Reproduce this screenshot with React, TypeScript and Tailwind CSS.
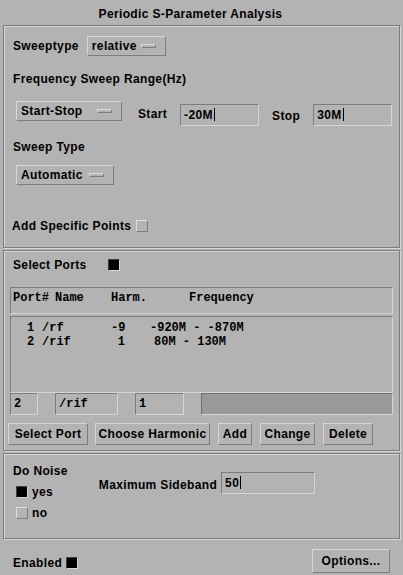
import React from 'react';

const Frame: React.FC<{ className?: string; children: React.ReactNode }> = ({ className = '', children }) => (
  <div className={`mx-[3px] border border-[#7c7c7c] shadow-[inset_1px_1px_0_#d6d6d6,1px_1px_0_#d6d6d6] ${className}`}>
    {children}
  </div>
);

const Dropdown: React.FC<{ label: string; className?: string }> = ({ label, className = '' }) => (
  <div
    className={`h-[20px] flex items-center justify-between pl-[4px] pr-[9px] border border-t-[#d6d6d6] border-l-[#d6d6d6] border-b-[#7c7c7c] border-r-[#7c7c7c] ${className}`}
  >
    <span>{label}</span>
    <span className="w-[15px] h-[4px] border border-t-[#dcdcdc] border-l-[#dcdcdc] border-b-[#7c7c7c] border-r-[#7c7c7c]" />
  </div>
);

const Field: React.FC<{ value?: string; className?: string; mono?: boolean; cursor?: boolean }> = ({
  value = '',
  className = '',
  mono,
  cursor,
}) => (
  <div
    className={`h-[22px] flex items-start pt-[3px] px-[3px] border border-t-[#7c7c7c] border-l-[#7c7c7c] border-b-[#d6d6d6] border-r-[#d6d6d6] ${
      mono ? "font-['Liberation_Mono',monospace] tracking-normal" : ''
    } ${className}`}
  >
    <span>{value}</span>
    {cursor && <span className="w-[1px] h-[13px] bg-black ml-[1px]" />}
  </div>
);

const Button: React.FC<{ label: string; className?: string }> = ({ label, className = '' }) => (
  <div
    className={`h-[22px] flex items-center justify-center border border-t-[#d6d6d6] border-l-[#d6d6d6] border-b-[#7c7c7c] border-r-[#7c7c7c] ${className}`}
  >
    {label}
  </div>
);

const Box: React.FC<{ on?: boolean; className?: string }> = ({ on, className = '' }) => (
  <span
    className={`inline-block w-[12px] h-[12px] border ${
      on
        ? 'bg-black border-t-[#404040] border-l-[#404040] border-b-[#d6d6d6] border-r-[#d6d6d6]'
        : 'border-t-[#dcdcdc] border-l-[#dcdcdc] border-b-[#7c7c7c] border-r-[#7c7c7c]'
    } ${className}`}
  />
);

const ports = [
  { no: '1', name: '/rf', harm: '-9', freq: '-920M - -870M', gap: 'ml-[25px]' },
  { no: '2', name: '/rif', harm: '1', freq: '80M - 130M', gap: 'ml-[29px]' },
];

export default function App() {
  return (
    <div className="w-[403px] h-[575px] bg-[#b3b3b3] text-black text-[12px] font-bold tracking-[0.35px] font-['Liberation_Sans',Arial,sans-serif] overflow-hidden leading-[14px]">
      <div className="h-[25px] pt-[7px] pr-[22px] text-center">Periodic S-Parameter Analysis</div>

      <Frame className="h-[223px]">
        <div className="mt-[10px] flex items-center">
          <span className="ml-[9px]">Sweeptype</span>
          <Dropdown label="relative" className="ml-[8px] w-[79px]" />
        </div>
        <div className="mt-[16px] ml-[9px]">Frequency Sweep Range(Hz)</div>
        <div className="mt-[15px] flex items-start">
          <Dropdown label="Start-Stop" className="ml-[12px] w-[106px]" />
          <span className="ml-[16px] mt-[6px]">Start</span>
          <Field value="-20M" cursor className="ml-[13px] w-[79px] mt-[3px]" />
          <span className="ml-[13px] mt-[8px]">Stop</span>
          <Field value="30M" cursor className="ml-[13px] w-[79px] mt-[3px]" />
        </div>
        <div className="mt-[14px] ml-[9px]">Sweep Type</div>
        <Dropdown label="Automatic" className="mt-[11px] ml-[12px] w-[98px]" />
        <div className="mt-[34px] flex items-center">
          <span className="ml-[8px]">Add Specific Points</span>
          <Box className="ml-[5px]" />
        </div>
      </Frame>

      <Frame className="mt-[2px] h-[201px]">
        <div className="mt-[7px] flex items-center">
          <span className="ml-[9px]">Select Ports</span>
          <Box on className="ml-[21px]" />
        </div>
        <div className="mt-[15px] ml-[6px] mr-[6px] h-[27px] pt-[3px] pl-[2px] border border-t-[#7c7c7c] border-l-[#7c7c7c] border-b-[#d6d6d6] border-r-[#d6d6d6] font-['Liberation_Mono',monospace] tracking-normal text-[12px] flex">
          <span className="w-[42px]">Port#</span>
          <span className="w-[56px]">Name</span>
          <span className="w-[78px]">Harm.</span>
          <span>Frequency</span>
        </div>
        <div className="mt-[2px] ml-[6px] mr-[6px] h-[77px] pt-[4px] border border-t-[#7c7c7c] border-l-[#7c7c7c] border-b-[#d6d6d6] border-r-[#d6d6d6] font-['Liberation_Mono',monospace] tracking-normal text-[12px]">
          {ports.map((p) => (
            <div key={p.no} className="flex">
              <span className="ml-[16px] w-[15px]">{p.no}</span>
              <span className="w-[69px]">{p.name}</span>
              <span className="w-[14px] text-right">{p.harm}</span>
              <span className={p.gap}>{p.freq}</span>
            </div>
          ))}
        </div>
        <div className="flex">
          <Field mono value="2" className="ml-[6px] w-[28px]" />
          <Field mono value="/rif" className="ml-[17px] w-[63px]" />
          <Field mono value="1" className="ml-[17px] w-[49px]" />
          <div className="ml-[17px] w-[192px] h-[22px] bg-[#999999] border border-t-[#6e6e6e] border-l-[#6e6e6e] border-b-[#d6d6d6] border-r-[#d6d6d6]" />
        </div>
        <div className="mt-[8px] flex">
          <Button label="Select Port" className="ml-[4px] w-[80px]" />
          <Button label="Choose Harmonic" className="ml-[7px] w-[115px]" />
          <Button label="Add" className="ml-[8px] w-[34px]" />
          <Button label="Change" className="ml-[8px] w-[55px]" />
          <Button label="Delete" className="ml-[8px] w-[50px]" />
        </div>
      </Frame>

      <Frame className="mt-[2px] h-[86px]">
        <div className="flex">
          <div className="ml-[9px] mt-[10px]">
            <div>Do Noise</div>
            <div className="mt-[7px] flex items-center">
              <Box on className="ml-[3px]" />
              <span className="ml-[4px]">yes</span>
            </div>
            <div className="mt-[7px] flex items-center">
              <Box className="ml-[3px]" />
              <span className="ml-[4px]">no</span>
            </div>
          </div>
          <div className="ml-[31px] mt-[18px] flex items-start">
            <span className="mt-[6px]">Maximum Sideband</span>
            <Field value="50" cursor className="ml-[4px] w-[94px]" />
          </div>
        </div>
      </Frame>

      <div className="mt-[10px] flex items-center justify-between">
        <div className="flex items-center ml-[13px] mt-[3px]">
          <span>Enabled</span>
          <Box on className="ml-[4px]" />
        </div>
        <Button label="Options..." className="mr-[13px] w-[78px] h-[24px]" />
      </div>
    </div>
  );
}
